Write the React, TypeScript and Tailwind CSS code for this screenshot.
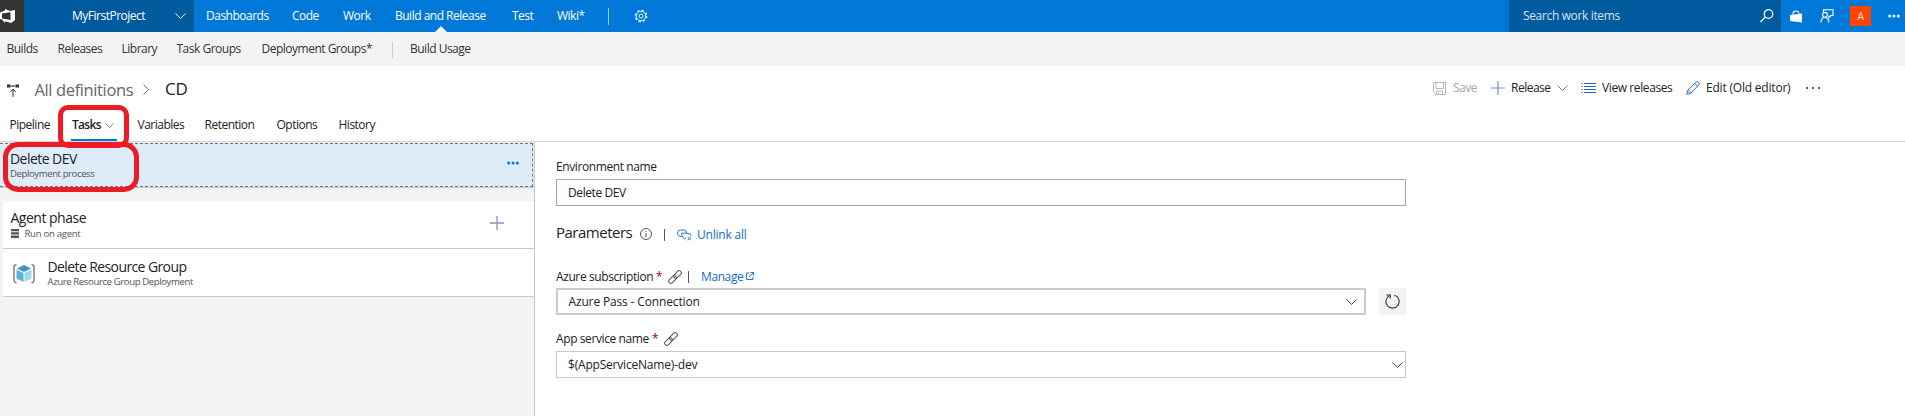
import React from "react";

const chevronDown = "M0.5 0.5 L5.5 5.5 L10.5 0.5";

function Chevron({ className }: { className: string }) {
  return (
    <svg viewBox="0 0 11 6" className={className} fill="none" stroke="currentColor">
      <path d={chevronDown} />
    </svg>
  );
}

function Dots({ className }: { className: string }) {
  return (
    <svg viewBox="0 0 12 4" className={className} fill="currentColor">
      <circle cx="1.7" cy="2" r="1.5" />
      <circle cx="6" cy="2" r="1.5" />
      <circle cx="10.3" cy="2" r="1.5" />
    </svg>
  );
}

function LinkIcon() {
  return (
    <svg viewBox="0 0 14 14" className="h-[14px] w-[14px] shrink-0 text-[#555]" fill="none" stroke="currentColor">
      <g transform="rotate(-45 7 7)">
        <rect x="-1" y="4.8" width="9" height="4.4" rx="2.2" />
        <rect x="6" y="4.8" width="9" height="4.4" rx="2.2" />
      </g>
    </svg>
  );
}

function TopBar() {
  return (
    <header className="flex h-8 items-center bg-[#0078d7] text-white">
      <div className="flex h-8 w-6 items-center bg-[#333333]">
        <svg viewBox="0 0 16 16" className="h-4 w-4" fill="white" fillRule="evenodd">
          <path d="M0 4.5 L5 2.6 V1 L10 3 L15 2 V12 L11 15 L5 13.3 V15 L2 11.5 L0 11 Z M2 5.5 V10.5 L10.5 12 V4.2 Z" />
        </svg>
      </div>
      <div className="flex h-8 w-[170px] items-center bg-[#005a9e] pl-12">
        <span className="w-[103px]">MyFirstProject</span>
        <Chevron className="h-[6px] w-[11px]" />
      </div>
      <nav className="flex h-8 items-center pl-3">
        <span className="w-[86px]">Dashboards</span>
        <span className="w-[51px]">Code</span>
        <span className="w-[52px]">Work</span>
        <span className="relative flex h-8 w-[117px] items-center">
          Build and Release
          <svg viewBox="0 0 12 6" className="absolute bottom-0 left-[40px] h-[6px] w-3" fill="#f3f3f3">
            <path d="M0 6 L6 0 L12 6 Z" />
          </svg>
        </span>
        <span className="w-[45px]">Test</span>
        <span className="w-[51px]">Wiki*</span>
      </nav>
      <div className="mr-[25px] h-[17px] w-px bg-[#9fcdf2]" />
      <svg viewBox="0 0 14 14" className="h-[14px] w-[14px]" fill="none" stroke="white">
        <circle cx="7" cy="7" r="5.7" strokeWidth="1.2" strokeDasharray="2.2 2.28" />
        <circle cx="7" cy="7" r="4.7" strokeWidth="0.9" />
        <circle cx="7" cy="7" r="2" strokeWidth="0.9" />
      </svg>
      <div className="ml-auto flex h-8 w-[272px] items-center bg-[#005a9e] pl-[14px] text-[#d5e6f4]">
        <span className="w-[237px] tracking-[-0.35px]">Search work items</span>
        <svg viewBox="0 0 14 14" className="h-[14px] w-[14px]" fill="none" stroke="white" strokeWidth="1.2">
          <circle cx="8.5" cy="5" r="4.3" />
          <path d="M5.3 8.2 L0.5 13" />
        </svg>
      </div>
      <div className="flex h-8 w-[124px] items-center pl-[9px]">
        <svg viewBox="0 0 12 13" className="h-[13px] w-3" fill="white">
          <path d="M0 5 L12 3.5 V12.5 L0 11 Z" />
          <path d="M3 4.5 V3 Q3.5 1 6 1 Q8.5 1 9 3.5" fill="none" stroke="white" strokeWidth="1.2" />
        </svg>
        <svg viewBox="0 0 14 14" className="ml-[18px] h-[14px] w-[14px]" fill="none" stroke="white" strokeWidth="1.1">
          <path d="M3.5 3 V0.8 H13 V6.5 H11 L9 8.5 V6.5" />
          <circle cx="5" cy="5.8" r="2.4" />
          <path d="M1 13.5 Q1 8.5 5 8.5 Q8.5 8.5 9 13.5" />
        </svg>
        <span className="ml-4 flex h-5 w-[21px] items-center justify-center bg-[#ff4500] text-[11px] text-[#ffe0d5]">A</span>
        <Dots className="ml-[17px] h-1 w-3" />
      </div>
    </header>
  );
}

function SubNav() {
  return (
    <nav className="flex h-[34px] items-center bg-[#f3f3f3] pb-px pl-[6.5px]">
      <span className="w-[51px]">Builds</span>
      <span className="w-16">Releases</span>
      <span className="w-[55px]">Library</span>
      <span className="w-[85px]">Task Groups</span>
      <span className="w-[130.5px]">Deployment Groups*</span>
      <span className="mr-[17px] mt-[3px] h-4 w-px bg-[#c8c8c8]" />
      <span>Build Usage</span>
    </nav>
  );
}

function Toolbar() {
  return (
    <div className="flex h-11 items-center text-[#222]">
      <svg viewBox="0 0 13 13" className="h-[13px] w-[13px]" fill="none" stroke="#b5b5b5">
        <path d="M0.5 0.5 H12.5 V12.5 H2.5 L0.5 10.5 Z M3 0.5 V6.5 H10.5 V0.5 M3.5 12.5 V9 H9.5 V12.5 M5.5 10.5 V12" />
      </svg>
      <span className="ml-[7px] w-[38px] text-[#a6a6a6]">Save</span>
      <svg viewBox="0 0 14 14" className="h-[14px] w-[14px]" stroke="#6b8fcb" strokeWidth="1.2">
        <path d="M0 7 H14 M7 0 V14" />
      </svg>
      <span className="ml-[6px] w-[46px]">Release</span>
      <Chevron className="h-[6px] w-[11px] text-[#777]" />
      <svg viewBox="0 0 15 11" className="ml-[13px] h-[11px] w-[15px]" stroke="#2467b8">
        <path d="M3 0.5 H15 M3 3.5 H15 M3 6.5 H15 M3 9.5 H15" />
        <path d="M0 0.5 H2 M0 3.5 H2 M0 6.5 H2 M0 9.5 H2" strokeOpacity="0.6" />
      </svg>
      <span className="ml-[6px] w-[84px] whitespace-nowrap tracking-[-0.4px]">View releases</span>
      <svg viewBox="0 0 14 14" className="h-[14px] w-[14px]" fill="none" stroke="#2d6cc0">
        <path d="M0.7 13.3 L1.8 9.3 L10 1.2 Q11.2 0.2 12.6 1.4 Q13.8 2.8 12.8 4 L4.7 12.2 Z M1.8 9.3 L4.7 12.2 M8.8 2.4 L11.6 5.2" />
      </svg>
      <span className="ml-[6px] w-[100px] whitespace-nowrap tracking-[-0.2px]">Edit (Old editor)</span>
      <svg viewBox="0 0 14 2" className="h-[2px] w-[14px]" fill="#666">
        <path d="M0 0 H2 V2 H0 Z M6 0 H8 V2 H6 Z M12 0 H14 V2 H12 Z" />
      </svg>
    </div>
  );
}

function DefinitionHeader() {
  return (
    <div className="h-[76px] border-b border-[#d8d8d8]">
      <div className="flex h-11 items-center justify-between pr-[85px]">
        <div className="flex items-center pl-[7px]">
          <svg viewBox="0 0 12 13" className="mt-[5px] h-[13px] w-3" fill="none" stroke="#333">
            <path d="M0 2 H3.5 M8.5 2 H12" strokeWidth="3" />
            <path d="M4 2 H8" strokeWidth="2" stroke="#888" />
            <path d="M6 5 V13 M3.2 8 L6 5.2 L8.8 8" />
          </svg>
          <span className="ml-[15.5px] mt-[5px] w-[108.5px] whitespace-nowrap text-[16.5px] tracking-[-0.38px] text-[#666]">All definitions</span>
          <svg viewBox="0 0 6 11" className="mt-[3px] h-[11px] w-[6px]" fill="none" stroke="#777">
            <path d="M0.5 0.5 L5.5 5.5 L0.5 10.5" />
          </svg>
          <span className="ml-[16px] mt-px text-[17px] tracking-[-0.2px] text-[#222]">CD</span>
        </div>
        <Toolbar />
      </div>
      <nav className="flex h-[31px] items-center pb-px pl-[9.5px] text-[#222]">
        <span className="w-[61.5px]">Pipeline</span>
        <span className="relative flex h-[31px] w-[66.5px] items-center">
          <span className="ml-px w-[33px] font-semibold tracking-[-0.7px]">Tasks</span>
          <Chevron className="h-[5px] w-[9px] text-[#777]" />
          <span className="absolute bottom-0 left-0 h-[2px] w-[46px] bg-[#0078d7]" />
          <span className="absolute -left-[13px] -top-[5px] z-10 h-[43px] w-[71px] rounded-[10px] border-[5px] border-[#ed1c24]" />
        </span>
        <span className="w-[67px]">Variables</span>
        <span className="w-[72px]">Retention</span>
        <span className="w-[62px]">Options</span>
        <span>History</span>
      </nav>
    </div>
  );
}

function TaskList() {
  return (
    <aside className="h-[274px] w-[535px] shrink-0 border-r border-[#c8c8c8] bg-[#f3f3f3]">
      <div className="relative h-[46px] border-b border-[#c8c8c8] bg-[#deecf9] pt-px">
        <div className="flex h-11 w-[533px] items-center border border-l-0 border-dashed border-[#777] pl-[10px]">
          <div className="grow">
            <div className="text-[14px] leading-[17px] tracking-[-0.55px] text-[#222]">Delete DEV</div>
            <div className="text-[9.6px] leading-[13px] tracking-[-0.42px] text-[#555]">Deployment process</div>
          </div>
          <Dots className="mb-1 mr-[13px] h-1 w-3 text-[#0f6fd0]" />
        </div>
        <div className="absolute left-[3px] top-0 z-10 h-[50px] w-[136px] rounded-[15px] border-[5px] border-[#ed1c24]" />
      </div>
      <div className="ml-[3px] mt-[13px] flex h-12 items-center border-b border-[#c8c8c8] bg-white pl-[7.5px] pt-0.5">
        <div className="grow">
          <div className="text-[14px] leading-4 tracking-[-0.5px] text-[#222]">Agent phase</div>
          <div className="flex items-center text-[9.6px] leading-[15px] tracking-[-0.3px] text-[#555]">
            <svg viewBox="0 0 8 9" className="mr-[6px] h-[9px] w-2" fill="#555">
              <path d="M0 0 H8 V2.3 H0 Z M0 3.3 H8 V5.6 H0 Z M0 6.6 H8 V9 H0 Z" />
            </svg>
            Run on agent
          </div>
        </div>
        <svg viewBox="0 0 14 14" className="mb-[5px] mr-[30px] h-[14px] w-[14px]" stroke="#8592c6" strokeWidth="1.3">
          <path d="M0 7 H14 M7 0 V14" />
        </svg>
      </div>
      <div className="ml-[3px] flex h-12 items-center border-b border-[#c8c8c8] bg-white pl-[10px] pt-px">
        <svg viewBox="0 0 22 20" className="mt-px h-5 w-[22px]">
          <path d="M11 1 L18 4.5 L11 8 L4 4.5 Z" fill="#3799c9" />
          <path d="M3.5 5.5 L10.5 9 V18 L3.5 14.5 Z" fill="#59b4d9" />
          <path d="M18.5 5.5 L11.5 9 V18 L18.5 14.5 Z" fill="#a3d7ec" />
          <path d="M3.5 1 H2.5 Q1 1 1 3 V16 Q1 18 2.5 18.5 H3.5 M18.5 1 H19.5 Q21 1 21 3 V16 Q21 18 19.5 18.5 H18.5" fill="none" stroke="#7a7a7a" strokeWidth="1.4" />
        </svg>
        <div className="ml-[12.5px]">
          <div className="text-[14px] leading-[17px] tracking-[-0.6px] text-[#222]">Delete Resource Group</div>
          <div className="text-[9.6px] leading-[13px] tracking-[-0.4px] text-[#555]">Azure Resource Group Deployment</div>
        </div>
      </div>
    </aside>
  );
}

function EnvironmentForm() {
  return (
    <main className="ml-[21px] w-[850px] pt-4 tracking-[-0.4px] text-[#222]">
      <div className="h-[21px] leading-[18px]">Environment name</div>
      <div className="flex h-[27px] items-center border border-[#a6a6a6] pl-[11px]">Delete DEV</div>
      <div className="flex h-[56px] items-center">
        <span className="w-[84px] pb-[3px] text-[15px] tracking-[-0.5px]">Parameters</span>
        <svg viewBox="0 0 12 12" className="h-3 w-3" fill="none" stroke="#555">
          <circle cx="6" cy="6" r="5.5" />
          <path d="M6 5 V9.3 M6 2.8 V4" />
        </svg>
        <span className="ml-3 mt-px h-3 w-px bg-[#555]" />
        <svg viewBox="0 0 15 12" className="ml-3 mt-px h-3 w-[15px]" fill="none" stroke="#2b75c8">
          <path d="M5 7.5 H3.5 Q0.5 7 0.5 4.2 Q0.5 1.2 3.5 1 H7 Q9.8 1.4 9.8 4 M4.5 4.2 H11 Q13.5 4.5 14 7 M4.7 4.2 Q4.5 9.5 9 9.5 M10.5 7.8 L14 11.3 M14 7.8 L10.5 11.3" />
        </svg>
        <span className="ml-[5px] mt-0.5 tracking-[-0.2px] text-[#106ebe]">Unlink all</span>
      </div>
      <div className="flex h-[26px] items-center pt-[3px]">
        <span className="w-[100px]">Azure subscription</span>
        <span className="w-[12px] text-[#a80000]">*</span>
        <LinkIcon />
        <span className="ml-[6px] h-3 w-px bg-[#555]" />
        <span className="ml-3 w-[45px]  text-[#106ebe]">Manage</span>
        <svg viewBox="0 0 8 8" className="mb-px h-2 w-2" fill="none" stroke="#2b75c8">
          <path d="M3.5 1 H0.5 V7.5 H7 V4.5 M4.5 0.5 H7.5 V3.5 M7.5 0.5 L3 5" />
        </svg>
      </div>
      <div className="flex h-[27px] justify-between">
        <div className="flex h-[27px] w-[810px] items-center justify-between border-2 border-[#cbcbcb] pl-[10.5px] pr-[7px] tracking-[-0.15px]">
          Azure Pass - Connection
          <Chevron className="h-[6px] w-[11px] text-[#444]" />
        </div>
        <div className="flex h-[27px] w-[27px] items-center justify-center bg-[#f3f3f3]">
          <svg viewBox="0 0 15 15" className="h-[15px] w-[15px]" fill="none" stroke="#333" strokeWidth="1.1">
            <path d="M9.5 1.2 A6.6 6.6 0 1 1 4.2 1.8 M1.5 1 H5.3 V4.5" />
          </svg>
        </div>
      </div>
      <div className="flex h-9 items-center pt-[11px]">
        <span className="w-[96px]">App service name</span>
        <span className="w-[12px] text-[#a80000]">*</span>
        <LinkIcon />
      </div>
      <div className="flex h-[27px] items-center justify-between border border-[#c8c8c8] pl-[11px] pr-[2px] tracking-[-0.2px]">
        $(AppServiceName)-dev
        <Chevron className="h-[6px] w-[11px] text-[#444]" />
      </div>
    </main>
  );
}

export default function App() {
  return (
    <div className="h-[416px] w-[1905px] overflow-hidden bg-white font-['Open_Sans','Noto_Sans',sans-serif] text-[12px] tracking-[-0.5px] text-[#333]">
      <TopBar />
      <SubNav />
      <DefinitionHeader />
      <div className="flex">
        <TaskList />
        <EnvironmentForm />
      </div>
    </div>
  );
}
